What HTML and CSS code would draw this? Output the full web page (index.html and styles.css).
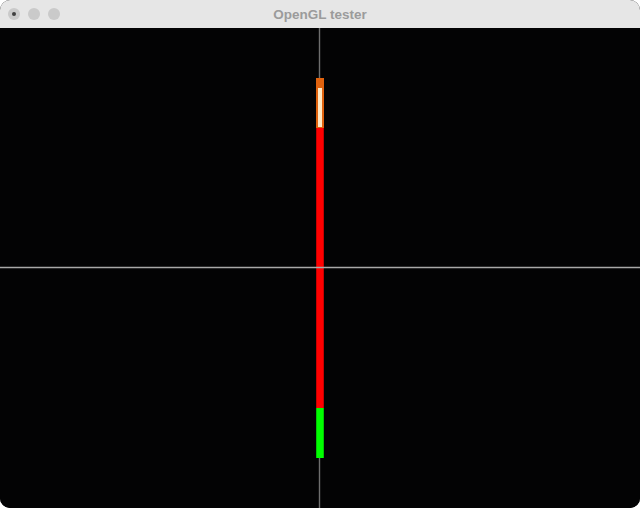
FILE: index.html
```html
<!DOCTYPE html>
<html>
<head>
    <meta charset="UTF-8">
    <title>OpenGL tester</title>
    <link rel="stylesheet" href="styles.css">
</head>
<body>
    <div class="window">
        <div class="titlebar">
            <div class="lights">
                <span class="light active"></span>
                <span class="light"></span>
                <span class="light"></span>
            </div>
            <div class="title">OpenGL tester</div>
        </div>
        <div class="canvas">
            <!-- escena dibujada -->
            <svg width="640" height="480" viewBox="0 0 640 480">
                <rect x="0" y="0" width="640" height="480" fill="#030304"/>
                <line x1="319.5" y1="0" x2="319.5" y2="480" stroke="#6e6e6e" stroke-width="1.4"/>
                <rect x="316" y="50" width="8" height="50" fill="#e0620e"/>
                <rect x="318" y="60" width="4" height="39" fill="#ffe8c4"/>
                <rect x="316" y="100" width="8" height="280" fill="#c80000"/>
                <rect x="317" y="100" width="6" height="280" fill="#ff0000"/>
                <rect x="316" y="380" width="8" height="50" fill="#00c800"/>
                <rect x="317" y="380" width="6" height="50" fill="#00ff00"/>
                <line x1="0" y1="239.5" x2="640" y2="239.5" stroke="#a8a8a8" stroke-width="1.4"/>
            </svg>
        </div>
    </div>
</body>
</html>
```

FILE: styles.css
```css
/* Ventana de prueba */
body {
    margin: 0;
    background-color: #ffffff;
    font-family: "Liberation Sans", Arial, sans-serif;
}
.window {
    width: 640px;
    height: 508px;
    border-radius: 10px;
    overflow: hidden;
    background-color: #030304;
}
.titlebar {
    height: 28px;
    background-color: #e6e6e6;
    display: flex;
    align-items: center;
    position: relative;
}
.lights {
    display: flex;
    gap: 8px;
    padding-left: 8px;
}
.light {
    width: 12px;
    height: 12px;
    border-radius: 50%;
    background-color: #cacaca;
    display: flex;
    align-items: center;
    justify-content: center;
}
.light.active::after {
    content: "";
    width: 4px;
    height: 4px;
    border-radius: 50%;
    background-color: #404040;
}
.title {
    position: absolute;
    left: 0;
    right: 0;
    text-align: center;
    font-size: 13.5px;
    font-weight: bold;
    color: #9b9b9b;
    pointer-events: none;
}
.canvas {
    height: 480px;
}
.canvas svg {
    display: block;
}
```
